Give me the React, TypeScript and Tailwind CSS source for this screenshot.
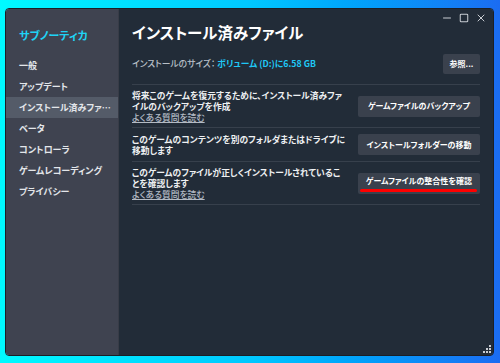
import { Minus, Square, X } from "lucide-react";

const menuItems = [
    "一般",
    "アップデート",
    "インストール済みファ…",
    "ベータ",
    "コントローラ",
    "ゲームレコーディング",
    "プライバシー",
];

const rows = [
    {
        lines: ["将来このゲームを復元するために、インストール済みファ", "イルのバックアップを作成"],
        link: true,
        button: "ゲームファイルのバックアップ",
        mark: false,
        height: "h-[43px]",
    },
    {
        lines: ["このゲームのコンテンツを別のフォルダまたはドライブに", "移動します"],
        link: false,
        button: "インストールフォルダーの移動",
        mark: false,
        height: "h-[34px]",
    },
    {
        lines: ["このゲームのファイルが正しくインストールされているこ", "とを確認します"],
        link: true,
        button: "ゲームファイルの整合性を確認",
        mark: true,
        height: "h-[43px]",
    },
];

function App() {
    return (
        <div
            className="w-[500px] h-[363px] bg-linear-to-r from-[#00faff] via-[#00c8ff] to-[#1b6cf2] pt-[8px] pl-[5px] overflow-hidden [font-feature-settings:'palt']"
            style={{ fontFamily: '"Noto Sans CJK JP", "Noto Sans", sans-serif' }}
        >
            <div className="relative w-[489px] h-[348px] flex rounded-[4px] border border-[#1b1f26] overflow-hidden">
                {/* sidebar */}
                <div className="w-[113px] shrink-0 bg-[#3f4350] border-r border-[#383c47] pt-[18px]">
                    <div className="pl-[13px] text-[11px] font-bold text-[#1fd3f5] leading-[16px]">
                        サブノーティカ
                    </div>
                    <div className="mt-[12px]">
                        {menuItems.map((item, i) => (
                            <div
                                key={item}
                                className={`h-[21px] pl-[13px] pr-[4px] flex items-center text-[9px] font-semibold text-[#e3e6ea] whitespace-nowrap overflow-hidden ${i === 2 ? "bg-[#545b68]" : ""}`}
                            >
                                {item}
                            </div>
                        ))}
                    </div>
                </div>

                {/* main */}
                <div className="flex-1 bg-[#222c38] pl-[13px] pr-[13px] pt-[13px]">
                    <h1 className="text-[15.5px] font-bold text-white leading-[20px]">
                        インストール済みファイル
                    </h1>

                    <div className="mt-[11px] flex items-center justify-between h-[22px]">
                        <div className="text-[8.75px] font-medium text-[#b9c0c8]">
                            インストールのサイズ：{" "}
                            <span className="text-[#1fc8f5] font-semibold">
                                ボリューム (D:)に6.58 GB
                            </span>
                        </div>
                        <button className="h-[20px] w-[37px] bg-[#3a414d] text-white text-[8px] font-bold rounded-[2px]">
                            参照...
                        </button>
                    </div>

                    <div className="mt-[9px] border-t border-[#37404c]">
                        {rows.map((row) => (
                            <div
                                key={row.button}
                                className={`flex items-center justify-between border-b border-[#37404c] ${row.height}`}
                            >
                                <div className="text-[8.75px] font-semibold text-[#eef0f2] leading-[11px] whitespace-nowrap">
                                    {row.lines.map((line) => (
                                        <div key={line}>{line}</div>
                                    ))}
                                    {row.link && (
                                        <div className="underline text-[#b3bac4] font-medium">
                                            よくある質問を読む
                                        </div>
                                    )}
                                </div>
                                <button
                                    className={`relative flex items-center justify-center h-[21px] w-[122px] bg-[#3a414d] text-white text-[8px] leading-[10px] font-bold rounded-[2px] whitespace-nowrap ${row.mark ? "pb-[5px]" : ""}`}
                                >
                                    {row.button}
                                    {row.mark && (
                                        <span className="absolute left-[2px] right-[3px] bottom-[2px] h-[2.5px] bg-[#ff0000] rounded-full" />
                                    )}
                                </button>
                            </div>
                        ))}
                    </div>
                </div>

                {/* window controls */}
                <div className="absolute top-[3px] right-[6px] flex items-center gap-[6px] text-[#c8ccd2]">
                    <Minus size={12} strokeWidth={2} />
                    <Square size={10} strokeWidth={2.5} />
                    <X size={12} strokeWidth={2} />
                </div>

                {/* resize grip */}
                <svg
                    className="absolute right-[2px] bottom-[2px]"
                    width="8"
                    height="8"
                    viewBox="0 0 8 8"
                >
                    <rect x="6" y="0" width="2" height="2" fill="#c8ccd2" />
                    <rect x="3" y="3" width="2" height="2" fill="#c8ccd2" />
                    <rect x="6" y="3" width="2" height="2" fill="#c8ccd2" />
                    <rect x="0" y="6" width="2" height="2" fill="#c8ccd2" />
                    <rect x="3" y="6" width="2" height="2" fill="#c8ccd2" />
                    <rect x="6" y="6" width="2" height="2" fill="#c8ccd2" />
                </svg>
            </div>
        </div>
    );
}

export default App;
